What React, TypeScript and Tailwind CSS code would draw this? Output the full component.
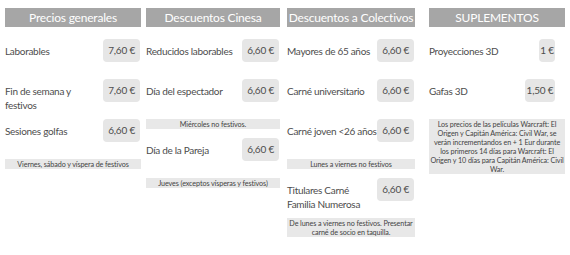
type Row = { label: string; price: string; box?: string };
type Block = { rows: Row[]; note?: string };
type Column = { title: string; className: string; boxMargin?: string; blocks: Block[] };

const columns: Column[] = [
  {
    title: "Precios generales",
    className: "ml-[5px] w-[136px]",
    blocks: [
      {
        rows: [
          { label: "Laborables", price: "7,60 €" },
          { label: "Fin de semana y festivos", price: "7,60 €" },
          { label: "Sesiones golfas", price: "6,60 €" },
        ],
        note: "Viernes, sábado y víspera de festivos",
      },
    ],
  },
  {
    title: "Descuentos Cinesa",
    className: "ml-[5px] w-[134px]",
    blocks: [
      {
        rows: [
          { label: "Reducidos laborables", price: "6,60 €" },
          { label: "Día del espectador", price: "6,60 €" },
        ],
        note: "Miércoles no festivos.",
      },
      {
        rows: [{ label: "Día de la Pareja", price: "6,60 €" }],
        note: "Jueves (exceptos vísperas y festivos)",
      },
    ],
  },
  {
    title: "Descuentos a Colectivos",
    className: "ml-[7px] w-[128px]",
    blocks: [
      {
        rows: [
          { label: "Mayores de 65 años", price: "6,60 €" },
          { label: "Carné universitario", price: "6,60 €" },
          { label: "Carné joven <26 años", price: "6,60 €" },
        ],
        note: "Lunes a viernes no festivos",
      },
      {
        rows: [{ label: "Titulares Carné\nFamilia Numerosa", price: "6,60 €" }],
        note: "De lunes a viernes no festivos. Presentar\ncarné de socio en taquilla.",
      },
    ],
  },
  {
    title: "SUPLEMENTOS",
    className: "ml-[14px] w-[136px]",
    boxMargin: "mr-[10px]",
    blocks: [
      {
        rows: [
          { label: "Proyecciones 3D", price: "1 €", box: "w-[16px] text-center" },
          { label: "Gafas 3D", price: "1,50 €", box: "w-[30px] text-center" },
        ],
        note: "Los precios de las películas Warcraft: El\nOrigen y Capitán América: Civil War, se\nverán incrementandos en + 1 Eur durante\nlos primeros 14 días para Warcraft: El\nOrigen y 10 días para Capitán América: Civil\nWar.",
      },
    ],
  },
];

function PriceRow({ row, boxMargin }: { row: Row; boxMargin?: string }) {
  return (
    <div className="flex h-[40px] items-start">
      <div className="flex-1 whitespace-pre-line pt-[4.5px] text-[10px] leading-[14px] tracking-[-0.3px] text-[#4d4d4d]">
        {row.label}
      </div>
      <div
        className={`h-[23px] shrink-0 rounded-[4px] bg-[#e6e6e6] text-[10px] leading-[23px] tracking-[-0.2px] text-[#4d4d4d] ${
          row.box ?? "w-[37px] pr-[5px] text-right"
        } ${boxMargin ?? "mr-[1px]"}`}
      >
        {row.price}
      </div>
    </div>
  );
}

export default function App() {
  return (
    <div className="h-[255px] w-[570px] bg-white font-['Lato','Open_Sans',sans-serif]">
      <div className="flex pt-[8px]">
        {columns.map((col) => (
          <div key={col.title} className={col.className}>
            <div className="h-[19px] whitespace-nowrap bg-[#a6a6a6] text-center text-[12px] leading-[19px] tracking-[-0.2px] text-white">
              {col.title}
            </div>
            <div className="pt-[12px]">
              {col.blocks.map((block, i) => (
                <div key={i} className={i > 0 ? "mt-[9px]" : ""}>
                  {block.rows.map((row) => (
                    <PriceRow key={row.label} row={row} boxMargin={col.boxMargin} />
                  ))}
                  {block.note && (
                    <div className="whitespace-pre bg-[#e8e8e8] py-[0.5px] text-center text-[7.2px] leading-[9px] tracking-[-0.1px] text-[#444]">
                      {block.note}
                    </div>
                  )}
                </div>
              ))}
            </div>
          </div>
        ))}
      </div>
    </div>
  );
}
